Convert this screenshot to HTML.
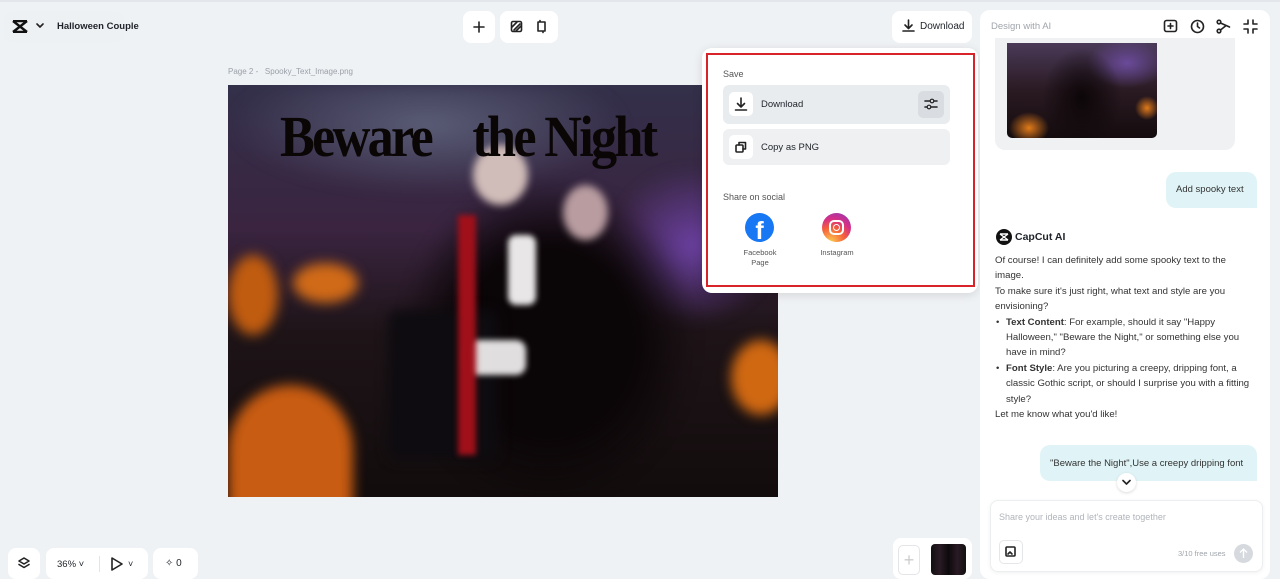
<!DOCTYPE html>
<html><head><meta charset="utf-8"><style>
*{box-sizing:border-box;margin:0;padding:0}
body{width:1280px;height:579px;background:#eff2f5;font-family:"Liberation Sans",sans-serif;position:relative;overflow:hidden;color:#1f2329}
.a{position:absolute}
.card{position:absolute;background:#fff;border-radius:8px}
.ic{stroke:#222;fill:none;stroke-width:1.6;stroke-linecap:round;stroke-linejoin:round}
.chat p{font-size:9.6px;line-height:15.4px;color:#333}
.b{position:absolute;filter:blur(6px)}
</style></head><body>
<div class="a" style="left:0;top:0;width:1280px;height:2px;background:#e3e6ea"></div>
<!-- top left -->
<div class="card" style="left:4px;top:11px;width:120px;height:32px;background:#eef1f4"></div>
<svg class="a" style="left:12px;top:20px" width="16" height="13" viewBox="0 0 16 13"><path d="M1 1h14M1 12h14M1 1l14 11M15 1L1 12" stroke="#111" stroke-width="2.4" fill="none"/></svg>
<svg class="a" style="left:36px;top:23px" width="8" height="6"><path d="M1 1l3 3 3-3" class="ic" stroke-width="1.3"/></svg>
<div class="a" style="left:57px;top:21px;font-size:9.5px;font-weight:bold">Halloween Couple</div>
<!-- top center -->
<div class="card" style="left:463px;top:11px;width:32px;height:32px"></div>
<svg class="a" style="left:472px;top:20px" width="14" height="14"><path d="M7 2v10M2 7h10" class="ic"/></svg>
<div class="card" style="left:500px;top:11px;width:58px;height:32px"></div>
<svg class="a" style="left:510px;top:20px" width="13" height="13"><rect x="1.5" y="1.5" width="10" height="10" rx="1.5" class="ic"/><path d="M4 10l6-6M2 7l5-5M6 11l5-5" class="ic" stroke-width="1.2"/></svg>
<svg class="a" style="left:535px;top:19px" width="13" height="15"><path d="M3 3v9M10 3v9M3 3h7M3 12h7M5 3V1.5M8 12v1.5" class="ic" stroke-width="1.5"/></svg>
<!-- page label -->
<div class="a" style="left:228px;top:67px;font-size:8px;color:#9aa0a8">Page 2 -&nbsp;&nbsp; Spooky_Text_Image.png</div>
<!-- image -->
<div class="a" style="left:228px;top:85px;width:550px;height:412px;overflow:hidden;background:linear-gradient(180deg,#33304a 0%,#3a2440 35%,#1e1418 60%,#120c0c 100%)">
<div class="b" style="left:0;top:0;width:550px;height:110px;background:radial-gradient(ellipse 200px 70px at 200px 40px,#5a5c76,transparent)"></div>
<div class="b" style="left:380px;top:80px;width:170px;height:160px;background:radial-gradient(ellipse at center,#6a40a0,transparent 70%)"></div>
<div class="b" style="left:170px;top:90px;width:300px;height:330px;background:radial-gradient(ellipse at center,#0a0507 40%,transparent 70%)"></div>
<div class="b" style="left:0;top:170px;width:50px;height:80px;background:#c05c10;border-radius:50%"></div>
<div class="b" style="left:65px;top:178px;width:65px;height:40px;border-radius:50%;background:#d06a18"></div>
<div class="b" style="left:0;top:300px;width:125px;height:130px;border-radius:50% 50% 0 0;background:#c85c12"></div>
<div class="b" style="left:503px;top:255px;width:60px;height:75px;border-radius:50%;background:#d06812"></div>
<div class="b" style="left:160px;top:225px;width:110px;height:150px;background:#0e0c10;border-radius:10px"></div>
<div class="b" style="left:245px;top:60px;width:55px;height:60px;border-radius:50%;background:#d0bcb8;filter:blur(4px)"></div>
<div class="b" style="left:335px;top:100px;width:45px;height:55px;border-radius:50%;background:#b89ca0;filter:blur(4px)"></div>
<div class="b" style="left:280px;top:150px;width:28px;height:70px;background:#e8e6e6;border-radius:8px;filter:blur(3px)"></div>
<div class="b" style="left:238px;top:255px;width:60px;height:35px;background:#e0dede;border-radius:10px;filter:blur(3px)"></div>
<div class="b" style="left:230px;top:130px;width:18px;height:240px;background:#a0101a;filter:blur(3px)"></div>
<div class="a" style="left:52px;top:18px;font-family:'Liberation Serif',serif;font-weight:bold;font-size:58px;color:#0a0606;letter-spacing:-3px;white-space:nowrap;transform:scaleX(.9);transform-origin:left">Beware&nbsp;&nbsp;&nbsp;&nbsp;the Night</div>
</div>
<!-- download button -->
<div class="card" style="left:892px;top:11px;width:80px;height:32px"></div>
<svg class="a" style="left:902px;top:19px" width="13" height="13"><path d="M6.5 1v8M3 6l3.5 3.5L10 6M1 12h11" class="ic" stroke-width="1.4"/></svg>
<div class="a" style="left:920px;top:21px;font-size:10px">Download</div>
<!-- popup -->
<div class="card" style="left:702px;top:48px;width:276px;height:245px;border-radius:10px;box-shadow:0 2px 10px rgba(0,0,0,.12)"></div>
<div class="a" style="left:706px;top:53px;width:269px;height:234px;border:2px solid #d9232b"></div>
<div class="a" style="left:723px;top:69px;font-size:9px;color:#555">Save</div>
<div class="a" style="left:723px;top:85px;width:227px;height:39px;background:#e9ecef;border-radius:6px"></div>
<div class="a" style="left:729px;top:92px;width:24px;height:24px;background:#fff;border-radius:5px"></div>
<svg class="a" style="left:734px;top:97px" width="14" height="14"><path d="M7 1v9M3.5 6.5L7 10l3.5-3.5M1.5 13h11" class="ic" stroke-width="1.4"/></svg>
<div class="a" style="left:761px;top:99px;font-size:9.5px">Download</div>
<div class="a" style="left:918px;top:91px;width:26px;height:27px;background:#d9dde2;border-radius:5px"></div>
<svg class="a" style="left:924px;top:97px" width="14" height="14"><path d="M1 4h12M1 10h12" class="ic" stroke-width="1.2"/><circle cx="8" cy="4" r="1.8" fill="#d9dde2" stroke="#222" stroke-width="1.2"/><circle cx="5" cy="10" r="1.8" fill="#d9dde2" stroke="#222" stroke-width="1.2"/></svg>
<div class="a" style="left:723px;top:129px;width:227px;height:36px;background:#eef0f2;border-radius:6px"></div>
<div class="a" style="left:729px;top:135px;width:24px;height:24px;background:#fff;border-radius:5px"></div>
<svg class="a" style="left:735px;top:141px" width="12" height="12"><rect x="1" y="4" width="7" height="7" rx="1" class="ic" stroke-width="1.2"/><path d="M4 4V1.5h6.5V8H8" class="ic" stroke-width="1.2"/></svg>
<div class="a" style="left:761px;top:142px;font-size:9.5px">Copy as PNG</div>
<div class="a" style="left:723px;top:192px;font-size:9px;color:#555">Share on social</div>
<div class="a" style="left:745px;top:213px;width:29px;height:29px;border-radius:50%;background:#1877f2;overflow:hidden"><div style="position:absolute;left:0;top:4px;width:29px;text-align:center;font-size:25px;font-weight:bold;color:#fff;line-height:29px">f</div></div>
<div class="a" style="left:730px;top:248px;width:60px;text-align:center;font-size:7.5px;line-height:9.5px;color:#555">Facebook<br>Page</div>
<div class="a" style="left:822px;top:213px;width:29px;height:29px;border-radius:50%;background:radial-gradient(circle at 30% 100%,#fdcc50,#f5603a 40%,#d62f86 65%,#8a3ab9)"></div>
<div class="a" style="left:829px;top:220px;width:15px;height:15px;border:2px solid #fff;border-radius:5px"></div>
<div class="a" style="left:833px;top:224px;width:7px;height:7px;border:1.6px solid #fff;border-radius:50%"></div>
<div class="a" style="left:807px;top:248px;width:60px;text-align:center;font-size:7.5px;color:#555">Instagram</div>
<!-- right panel -->
<div class="card" style="left:980px;top:10px;width:290px;height:569px;border-radius:10px"></div>
<div class="a" style="left:991px;top:21px;font-size:9.5px;color:#a0a5ab">Design with AI</div>
<svg class="a" style="left:1163px;top:19px" width="15" height="15"><rect x="1.5" y="1.5" width="12" height="11" rx="2" class="ic" stroke-width="1.3"/><path d="M7.5 4.5v5M5 7h5" class="ic" stroke-width="1.3"/></svg>
<svg class="a" style="left:1190px;top:19px" width="15" height="15"><circle cx="7.5" cy="7.5" r="6" class="ic" stroke-width="1.3"/><path d="M7.5 4v3.5l2 1.5" class="ic" stroke-width="1.3"/></svg>
<svg class="a" style="left:1216px;top:19px" width="15" height="15"><circle cx="3" cy="3" r="1.8" class="ic" stroke-width="1.3"/><circle cx="3" cy="12" r="1.8" class="ic" stroke-width="1.3"/><path d="M4.5 4l9 4M4.5 11l5-4" class="ic" stroke-width="1.3"/></svg>
<svg class="a" style="left:1243px;top:19px" width="15" height="15"><path d="M5 1v4H1M10 1v4h4M5 14v-4H1M10 14v-4h4" class="ic" stroke-width="1.3"/></svg>
<div class="a" style="left:995px;top:38px;width:240px;height:112px;background:#eff1f3;border-radius:0 0 10px 10px"></div>
<div class="a" style="left:1007px;top:43px;width:150px;height:95px;border-radius:0 0 5px 5px;overflow:hidden;background:
radial-gradient(ellipse 20px 16px at 22px 85px,#e07a1a,transparent),
radial-gradient(ellipse 12px 12px at 140px 65px,#e07a1a,transparent),
radial-gradient(ellipse 40px 50px at 75px 55px,#0c0608,transparent),
radial-gradient(ellipse 40px 25px at 120px 20px,#6a4a9a,transparent),
linear-gradient(180deg,#4a3a58,#2a1a22 50%,#140c0e)"></div>
<div class="a" style="left:1166px;top:172px;width:91px;height:36px;background:#e0f4f7;border-radius:10px 10px 0 10px"></div>
<div class="a" style="left:1176px;top:184px;font-size:9.5px;color:#333">Add spooky text</div>
<div class="a" style="left:996px;top:229px;width:16px;height:16px;border-radius:50%;background:#111"></div>
<svg class="a" style="left:999px;top:233px" width="10" height="8"><path d="M1 1h8M1 7h8M1 1l8 6M9 1L1 7" stroke="#fff" stroke-width="1.4" fill="none"/></svg>
<div class="a" style="left:1015px;top:231px;font-size:10.5px;font-weight:bold">CapCut AI</div>
<div class="a chat" style="left:995px;top:253px;width:262px">
<p>Of course! I can definitely add some spooky text to the image.</p>
<p>To make sure it's just right, what text and style are you envisioning?</p>
<p style="padding-left:11px;position:relative"><span style="position:absolute;left:1px">•</span><b>Text Content</b>: For example, should it say "Happy Halloween," "Beware the Night," or something else you have in mind?</p>
<p style="padding-left:11px;position:relative"><span style="position:absolute;left:1px">•</span><b>Font Style</b>: Are you picturing a creepy, dripping font, a classic Gothic script, or should I surprise you with a fitting style?</p>
<p>Let me know what you'd like!</p>
</div>
<div class="a" style="left:1040px;top:445px;width:217px;height:36px;background:#e0f4f7;border-radius:10px 10px 0 10px"></div>
<div class="a" style="left:1050px;top:458px;font-size:9.5px;color:#333;white-space:nowrap">"Beware the Night",Use a creepy dripping font</div>
<div class="a" style="left:1117px;top:473px;width:19px;height:19px;border-radius:50%;background:#fff;box-shadow:0 1px 3px rgba(0,0,0,.15)"></div>
<svg class="a" style="left:1122px;top:479px" width="9" height="7"><path d="M1 1.5l3.5 3.5 3.5-3.5" class="ic" stroke-width="1.4"/></svg>
<div class="a" style="left:990px;top:500px;width:273px;height:72px;background:#fff;border:1px solid #eceef0;border-radius:8px;box-shadow:0 1px 4px rgba(0,0,0,.06)"></div>
<div class="a" style="left:999px;top:512px;font-size:9px;color:#b0b4ba">Share your ideas and let's create together</div>
<div class="a" style="left:999px;top:540px;width:24px;height:24px;border:1px solid #e4e6e9;border-radius:5px"></div>
<svg class="a" style="left:1005px;top:546px" width="12" height="12"><rect x="1" y="1" width="9" height="9" rx="1" class="ic" stroke-width="1.1"/><path d="M3 8l2-2 2 2" class="ic" stroke-width="1"/></svg>
<div class="a" style="left:1178px;top:549px;font-size:7.5px;color:#a0a5ab">3/10 free uses</div>
<div class="a" style="left:1234px;top:544px;width:19px;height:19px;border-radius:50%;background:#d6dadf"></div>
<svg class="a" style="left:1239px;top:548px" width="9" height="11"><path d="M4.5 10V1M1 4.5L4.5 1 8 4.5" stroke="#fff" stroke-width="1.3" fill="none"/></svg>
<!-- bottom left -->
<div class="card" style="left:8px;top:548px;width:32px;height:31px"></div>
<svg class="a" style="left:17px;top:557px" width="14" height="14"><path d="M7 1l5 3-5 3-5-3z M2 7.5l5 3 5-3" class="ic" stroke-width="1.3"/></svg>
<div class="card" style="left:46px;top:548px;width:102px;height:31px"></div>
<div class="a" style="left:57px;top:559px;font-size:9.5px">36% ˅</div>
<div class="a" style="left:99px;top:556px;width:1px;height:16px;background:#e2e4e7"></div>
<svg class="a" style="left:110px;top:557px" width="14" height="14"><path d="M2 1l10 6-10 6z" class="ic" stroke-width="1.3"/></svg>
<div class="a" style="left:128px;top:559px;font-size:9px">˅</div>
<div class="card" style="left:153px;top:548px;width:45px;height:31px"></div>
<div class="a" style="left:165px;top:558px;font-size:10px">✧ 0</div>
<!-- bottom thumbnails -->
<div class="card" style="left:893px;top:538px;width:79px;height:41px"></div>
<div class="a" style="left:898px;top:545px;width:22px;height:30px;border:1px solid #e3e5e8;border-radius:5px;color:#ccc;font-size:18px;text-align:center;line-height:28px">+</div>
<div class="a" style="left:931px;top:544px;width:35px;height:31px;border-radius:4px;background:linear-gradient(90deg,#111 0,#2a1a24 25%,#0c0a0c 50%,#2a1a24 75%,#111)"></div>
</body></html>
